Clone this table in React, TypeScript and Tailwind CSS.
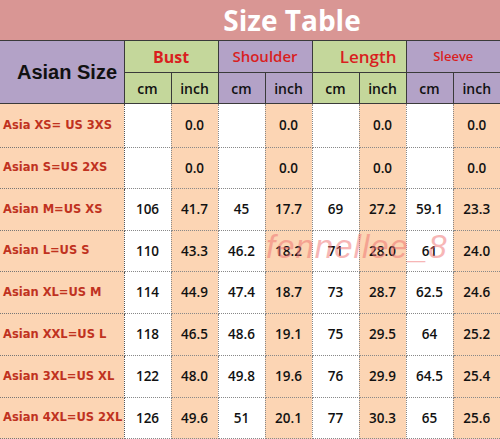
import React from "react";

const rows: { label: string; v: string[] }[] = [
  { label: "Asia XS= US 3XS", v: ["", "0.0", "", "0.0", "", "0.0", "", "0.0"] },
  { label: "Asian S=US 2XS", v: ["", "0.0", "", "0.0", "", "0.0", "", "0.0"] },
  { label: "Asian M=US XS", v: ["106", "41.7", "45", "17.7", "69", "27.2", "59.1", "23.3"] },
  { label: "Asian L=US S", v: ["110", "43.3", "46.2", "18.2", "71", "28.0", "61", "24.0"] },
  { label: "Asian XL=US M", v: ["114", "44.9", "47.4", "18.7", "73", "28.7", "62.5", "24.6"] },
  { label: "Asian XXL=US L", v: ["118", "46.5", "48.6", "19.1", "75", "29.5", "64", "25.2"] },
  { label: "Asian 3XL=US XL", v: ["122", "48.0", "49.8", "19.6", "76", "29.9", "64.5", "25.4"] },
  { label: "Asian 4XL=US 2XL", v: ["126", "49.6", "51", "20.1", "77", "30.3", "65", "25.6"] },
];

const rowH = ["h-[44px]", "h-[41px]", "h-[42px]", "h-[41px]", "h-[42px]", "h-[42px]", "h-[42px]", "h-[41px]"];
const colW = ["w-[47px]", "w-[49px]", "w-[45px]", "w-[47px]", "w-[45px]", "w-[51px]", "w-[46px]", "w-[46px]"];

export default function App() {
  return (
    <div className="relative w-[500px] h-[439px] overflow-hidden bg-white font-['Open_Sans',sans-serif]">
      <div className="h-[40px] bg-[#d99694] flex items-center justify-center pl-[84px]">
        <span className="text-white font-bold text-[28px] leading-none font-['Open_Sans',sans-serif]">Size Table</span>
      </div>
      <table className="border-collapse table-fixed w-[500px]">
        <thead>
          <tr className="h-[32px]">
            <th rowSpan={2} className="w-[124px] bg-[#b3a2c7] border border-[#3a3a3a] border-l-0 text-[20px] font-bold text-[#111] font-['Liberation_Sans',sans-serif] text-left pl-[17px]">
              Asian Size
            </th>
            <th colSpan={2} className="bg-[#c4d79b] border border-[#3a3a3a] text-[#d91f1f] text-[16px] font-bold">Bust</th>
            <th colSpan={2} className="bg-[#b3a2c7] border border-[#3a3a3a] text-[#d91f1f] text-[15px] font-semibold">Shoulder</th>
            <th colSpan={2} className="bg-[#c4d79b] border border-[#3a3a3a] text-[#d91f1f] text-[17px] font-semibold text-right pr-[9px]">Length</th>
            <th colSpan={2} className="bg-[#b3a2c7] border border-[#3a3a3a] border-r-0 text-[#d91f1f] text-[13px] font-semibold">Sleeve</th>
          </tr>
          <tr className="h-[31px]">
            {colW.map((w, i) => {
              const green = i === 0 || i === 1 || i === 4 || i === 5;
              return (
                <th
                  key={i}
                  className={`${w} ${green ? "bg-[#c4d79b]" : "bg-[#b3a2c7]"} border border-[#3a3a3a] ${i === 7 ? "border-r-0" : ""} text-[14px] font-semibold text-[#111]`}
                >
                  {i % 2 === 0 ? "cm" : "inch"}
                </th>
              );
            })}
          </tr>
        </thead>
        <tbody>
          {rows.map((r, ri) => (
            <tr key={ri} className={rowH[ri]}>
              <td className="bg-[#fcd5b4] border border-dotted border-l-0 border-[#777] border-r-[#555] pl-[3px] text-[11.5px] font-bold text-[#c0321f] font-['DejaVu_Sans',sans-serif] whitespace-nowrap">
                {r.label}
              </td>
              {r.v.map((v, ci) => (
                <td
                  key={ci}
                  className={`${ci % 2 === 1 ? "bg-[#fcd5b4]" : "bg-white"} border border-dotted border-[#888] ${ci === 7 ? "border-r-0" : ""} text-center text-[13.5px] font-semibold text-[#111]`}
                >
                  {v}
                </td>
              ))}
            </tr>
          ))}
        </tbody>
      </table>
      <div className="absolute left-[266px] top-[222px] text-[33px] italic text-[#f07070] opacity-50 tracking-[1px] font-['Liberation_Sans',sans-serif] pointer-events-none">
        fennellee_8
      </div>
    </div>
  );
}
